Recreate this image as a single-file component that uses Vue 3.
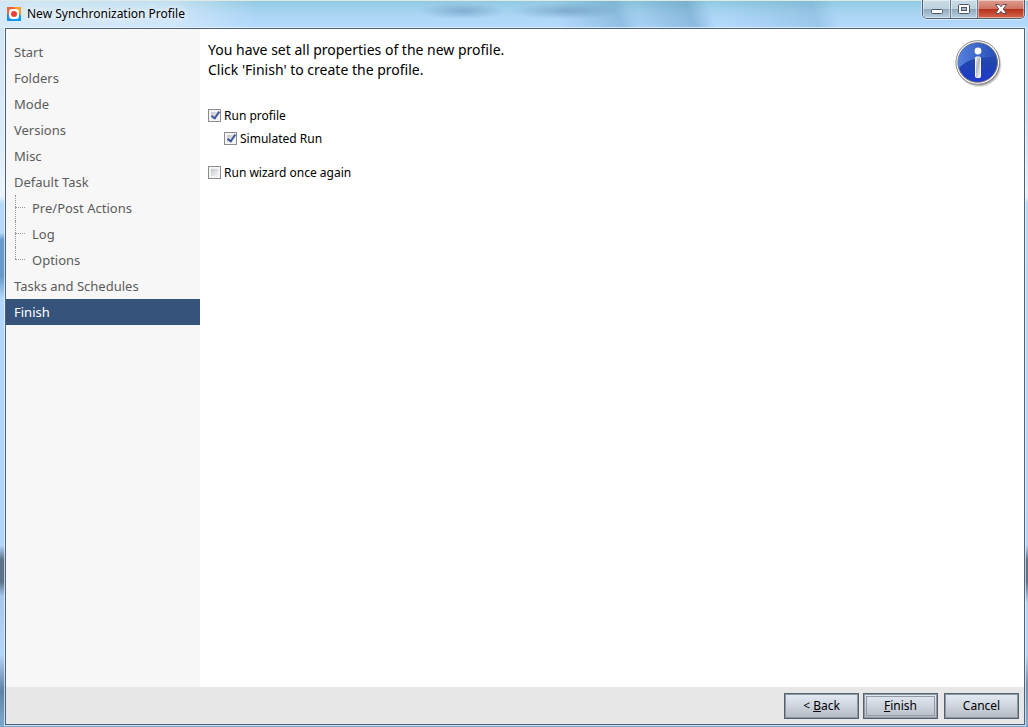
<script setup>
import { ref } from 'vue'

const steps = [
  { label: 'Start' },
  { label: 'Folders' },
  { label: 'Mode' },
  { label: 'Versions' },
  { label: 'Misc' },
  { label: 'Default Task' },
  { label: 'Pre/Post Actions', child: true },
  { label: 'Log', child: true },
  { label: 'Options', child: true, last: true },
  { label: 'Tasks and Schedules' },
  { label: 'Finish' },
]
const current = ref('Finish')
const runProfile = ref(true)
const simulated = ref(true)
const again = ref(false)
</script>

<template>
  <div class="window">
    <header class="titlebar">
      <svg class="app-icon" viewBox="0 0 14 14" aria-hidden="true">
        <path d="M0 0H14L0 14Z" fill="#f0643c" />
        <path d="M14 0V14H0Z" fill="#0c9cf0" />
        <path d="M7 0H14V9L11 5Z" fill="#f9a01b" />
        <path d="M0 6V14H6L3 10Z" fill="#1b8fe6" />
        <rect x="2" y="2" width="10" height="10" rx="3" fill="#fff" />
        <circle cx="7" cy="7" r="3" fill="#ee4136" />
      </svg>
      <h1 class="title">New Synchronization Profile</h1>
      <div class="caption">
        <button type="button" class="cap" aria-label="Minimize">
          <svg width="14" height="14" viewBox="0 0 14 14"><rect x="1.5" y="7.5" width="11" height="4" rx="1" fill="#fff" stroke="#4c5566" /></svg>
        </button>
        <button type="button" class="cap max" aria-label="Maximize">
          <svg width="14" height="14" viewBox="0 0 14 14">
            <rect x="1.5" y="2.5" width="11" height="9" rx="1" fill="#fff" stroke="#4c5566" />
            <rect x="4.5" y="5.5" width="5" height="3" fill="#a9bccd" stroke="#4c5566" />
          </svg>
        </button>
        <button type="button" class="cap close" aria-label="Close">
          <svg width="14" height="14" viewBox="0 0 14 14">
            <path d="M1.5 2.5H5L7 4.7L9 2.5H12.5L9.3 7L12.5 11.5H9L7 9.3L5 11.5H1.5L4.7 7Z" fill="#fff" stroke="#5c4a55" stroke-linejoin="round" />
          </svg>
        </button>
      </div>
    </header>

    <div class="client">
      <div class="body">
        <nav class="steps" aria-label="Wizard steps">
          <a
            v-for="s in steps"
            :key="s.label"
            href="#"
            class="step"
            :class="{ child: s.child, last: s.last, active: s.label === current }"
            @click.prevent="current = s.label"
          >{{ s.label }}</a>
        </nav>
        <main class="page">
          <div class="content">
            <p class="intro">You have set all properties of the new profile.<br />Click 'Finish' to create the profile.</p>
            <label class="check"><input v-model="runProfile" type="checkbox" />Run profile</label>
            <label class="check nested"><input v-model="simulated" type="checkbox" />Simulated Run</label>
            <label class="check apart"><input v-model="again" type="checkbox" />Run wizard once again</label>
          </div>
          <svg class="info" viewBox="0 0 48 48" role="img" aria-label="Information">
            <defs>
              <linearGradient id="ball" x1="0" y1="0" x2="0" y2="1">
                <stop offset="0" stop-color="#2a55b8" />
                <stop offset="0.5" stop-color="#1f45ae" />
                <stop offset="1" stop-color="#2038cc" />
              </linearGradient>
              <linearGradient id="gloss" x1="0" y1="0" x2="1" y2="0">
                <stop offset="0" stop-color="#5580dc" />
                <stop offset="1" stop-color="#2650b8" />
              </linearGradient>
              <linearGradient id="stem" x1="0" y1="0" x2="1" y2="1">
                <stop offset="0" stop-color="#fff" />
                <stop offset="0.4" stop-color="#b4b6bc" />
                <stop offset="1" stop-color="#fff" />
              </linearGradient>
              <radialGradient id="shade">
                <stop offset="0.85" stop-color="#555" stop-opacity="0.7" />
                <stop offset="1" stop-color="#777" stop-opacity="0" />
              </radialGradient>
            </defs>
            <circle cx="24" cy="24.5" r="23" fill="url(#shade)" />
            <circle cx="22.7" cy="22.5" r="21.8" fill="#fff" stroke="#85858a" />
            <circle cx="22.7" cy="22.5" r="19.8" fill="url(#ball)" stroke="#77777c" />
            <path d="M3.6 28A19.3 19.3 0 0 1 41.1 17.5Q17 15 3.6 28Z" fill="url(#gloss)" />
            <circle cx="23" cy="11" r="3.4" fill="#fff" />
            <rect x="20.5" y="17" width="5" height="20.5" rx="1" fill="url(#stem)" stroke="#f4f4f6" />
          </svg>
        </main>
      </div>
      <footer class="actions">
        <button type="button" class="btn"><span>&lt; <u>B</u>ack</span></button>
        <button type="button" class="btn default"><span><u>F</u>inish</span></button>
        <button type="button" class="btn"><span>Cancel</span></button>
      </footer>
    </div>
  </div>
</template>

<style>
body {
  margin: 0;
}
</style>

<style scoped>
.window {
  box-sizing: border-box;
  min-height: 100vh;
  display: flex;
  flex-direction: column;
  padding: 0 3px 2px 5px;
  color: #000;
  font-family: "Noto Sans", "Open Sans", sans-serif;
  font-size: 12px;
  background:
    linear-gradient(#dfeae6, #dfeae6) 0 0 / 100% 1px no-repeat,
    radial-gradient(ellipse 44px 8px at 45% 11px, rgba(65, 105, 150, 0.35), transparent) 0 0 / 100% 20px no-repeat,
    radial-gradient(ellipse 56px 8px at 55% 11px, rgba(65, 105, 150, 0.35), transparent) 0 0 / 100% 20px no-repeat,
    linear-gradient(70deg, transparent 70%, rgba(70, 130, 170, 0.2) 79%, transparent 81%) 0 0 / 100% 28px no-repeat,
    linear-gradient(70deg, transparent 61%, rgba(70, 130, 170, 0.1) 62%, rgba(70, 130, 170, 0.35) 67%, transparent 69%) 0 0 / 100% 28px no-repeat,
    linear-gradient(70deg, transparent 54%, rgba(70, 130, 170, 0.3) 60%, transparent 62%) 0 0 / 100% 28px no-repeat,
    linear-gradient(90deg, rgba(225, 238, 249, 0.8) 0, rgba(225, 238, 249, 0.6) 17%, transparent 25%) 0 0 / 100% 28px no-repeat,
    linear-gradient(#8fc8de, #a8d4f3 45%, #b5daff) 0 0 / 100% 28px no-repeat,
    linear-gradient(#b9dbf6 0, #c4dff8 15%, #e8f3fd 27%, #b5d8fb 28%, #b3d6fb 75%, #5b7289 77%, #5b7289 80%, #b3d6fb 83%, #b3d6fb 90%, #7591b0 94%, #7caace) 100% 0 / 4px 100% no-repeat,
    linear-gradient(#d0e4f5 0, #dcecf9 20%, #ecf5fc 27%, #b5d8fb 28%, #b5d8fb 32%, #659bca 33%, #659bca 38%, #b3d6fb 41%, #b3d6fb 75%, #5b7289 77%, #5b7289 80%, #a5c7eb 82%, #b3d6fb 90%, #5f83a5 95%, #7caace);
}
.titlebar {
  display: flex;
  align-items: center;
  height: 28px;
  padding-left: 2px;
}
.app-icon {
  width: 14px;
  height: 14px;
  margin-right: 6px;
}
.title {
  flex: 1;
  margin: 0;
  font-size: 12px;
  line-height: 16px;
  font-weight: 400;
  text-shadow: 0 0 6px #fff, 0 0 8px #fff;
}
.caption {
  align-self: flex-start;
  display: flex;
  height: 18px;
  border: 1px solid #4f5f75;
  border-top: 0;
  border-radius: 0 0 5px 5px;
  overflow: hidden;
  box-shadow: 0 0 0 1px rgba(255, 255, 255, 0.5);
}
.cap {
  box-sizing: border-box;
  display: flex;
  align-items: center;
  justify-content: center;
  width: 28px;
  padding: 0;
  border: 0;
  border-right: 1px solid #6b7d93;
  background: linear-gradient(#c9dce7 0, #bcd0dd 48%, #93a9bb 50%, #b4cfe2 100%);
  box-shadow: inset 0 0 0 1px rgba(255, 255, 255, 0.45);
}
.cap.max {
  width: 27px;
}
.cap.close {
  width: 46px;
  border-right: 0;
  background: linear-gradient(#dd9d90 0, #cf7464 48%, #b52f18 50%, #d5664a 100%);
}
.client {
  flex: 1;
  display: flex;
  flex-direction: column;
  border: 1px solid #51617a;
  box-shadow: 0 0 0 1px rgba(235, 246, 255, 0.7);
  background: #fff;
}
.body {
  flex: 1;
  display: flex;
}
.steps {
  flex: none;
  width: 194px;
  padding-top: 10px;
  background: #f7f7f7;
}
.step {
  position: relative;
  display: block;
  padding-left: 8px;
  font-size: 13px;
  line-height: 26px;
  color: #5b5b5b;
  text-decoration: none;
}
.step.child {
  padding-left: 26px;
}
.step.child::before {
  content: "";
  position: absolute;
  left: 9px;
  top: 0;
  height: 26px;
  border-left: 1px dotted #999;
}
.step.child.last::before {
  height: 12px;
}
.step.child::after {
  content: "";
  position: absolute;
  left: 9px;
  top: 12px;
  width: 10px;
  border-top: 1px dotted #999;
}
.step.active {
  background: #36537b;
  color: #fff;
}
.page {
  flex: 1;
  display: flex;
  align-items: flex-start;
  justify-content: space-between;
  padding: 11px 21px 11px 8px;
}
.intro {
  margin: 0 0 27px;
  font-size: 14px;
  line-height: 20px;
}
.check {
  display: flex;
  align-items: center;
  height: 16px;
  margin-bottom: 7px;
}
.check.nested {
  margin-left: 16px;
}
.check.apart {
  margin-top: 18px;
}
.check input {
  appearance: none;
  width: 13px;
  height: 13px;
  margin: 0 3px 0 0;
  border: 1px solid #8a8c8e;
  background: linear-gradient(135deg, #c3c8cf, #f4f5f6) content-box, #f4f4f4;
  padding: 2px;
  box-sizing: border-box;
  position: relative;
}
.check input:checked::after {
  content: "";
  position: absolute;
  left: 4px;
  top: 0;
  width: 3px;
  height: 7px;
  border: solid #42589c;
  border-width: 0 2px 2px 0;
  transform: rotate(35deg);
}
.info {
  flex: none;
  width: 48px;
  height: 48px;
}
.actions {
  display: flex;
  justify-content: flex-end;
  gap: 4px;
  padding: 6px 5px 5px;
  background: #e7e7e7;
}
.btn {
  width: 75px;
  height: 26px;
  padding: 2px;
  border: 1px solid #56616f;
  box-shadow: inset 0 0 0 1px #8d97a4;
  background: linear-gradient(#e3ebf5, #cdd4de 50%, #b5bac1);
  font: inherit;
  color: #000;
}
.btn span {
  display: block;
  line-height: 18px;
  border: 1px solid transparent;
}
.btn.default span {
  border-color: #929aa6;
}
.btn + .btn:last-child {
  margin-left: 2px;
}
</style>
